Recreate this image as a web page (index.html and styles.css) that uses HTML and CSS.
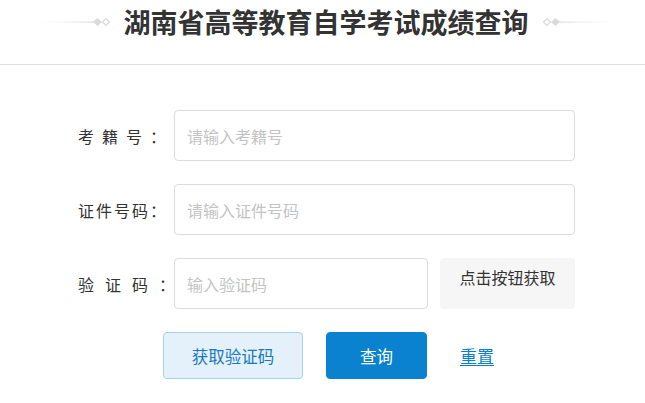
FILE: index.html
```html
<!DOCTYPE html>
<html lang="zh-CN">
<head>
<meta charset="utf-8">
<title>湖南省高等教育自学考试成绩查询</title>
<link rel="stylesheet" href="styles.css">
</head>
<body>
<header class="header">
  <div class="title-row">
    <svg class="decor" width="70" height="10" viewBox="0 0 70 10">
      <defs>
        <linearGradient id="gl" x1="0" x2="1" y1="0" y2="0">
          <stop offset="0" stop-color="#e4e4e4" stop-opacity="0"/>
          <stop offset="1" stop-color="#dcdcdc"/>
        </linearGradient>
      </defs>
      <rect x="0" y="4.5" width="55" height="1.2" fill="url(#gl)"/>
      <path d="M53 5 L57.5 1 L62 5 L57.5 9 Z" fill="#dadada"/>
      <path d="M62.5 5 L66 1.6 L69.5 5 L66 8.4 Z" fill="none" stroke="#dadada" stroke-width="1.3"/>
    </svg>
    <h1 class="title">湖南省高等教育自学考试成绩查询</h1>
    <svg class="decor" width="70" height="10" viewBox="0 0 70 10">
      <defs>
        <linearGradient id="gr" x1="0" x2="1" y1="0" y2="0">
          <stop offset="0" stop-color="#dcdcdc"/>
          <stop offset="1" stop-color="#e4e4e4" stop-opacity="0"/>
        </linearGradient>
      </defs>
      <path d="M0.5 5 L4 1.6 L7.5 5 L4 8.4 Z" fill="none" stroke="#dadada" stroke-width="1.3"/>
      <path d="M8 5 L12.5 1 L17 5 L12.5 9 Z" fill="#dadada"/>
      <rect x="15" y="4.5" width="55" height="1.2" fill="url(#gr)"/>
    </svg>
  </div>
</header>

<main class="form">
  <div class="row">
    <label class="label"><span class="label-text">考籍号：</span></label>
    <input class="input" type="text" placeholder="请输入考籍号">
  </div>
  <div class="row">
    <label class="label"><span class="label-text">证件号码：</span></label>
    <input class="input" type="text" placeholder="请输入证件号码">
  </div>
  <div class="row">
    <label class="label"><span class="label-text label-text--wide">验证码：</span></label>
    <input class="input input--short" type="text" placeholder="输入验证码">
    <div class="captcha">点击按钮获取</div>
  </div>
  <div class="actions">
    <button class="btn btn--light">获取验证码</button>
    <button class="btn btn--primary">查询</button>
    <a class="reset" href="#">重置</a>
  </div>
</main>
</body>
</html>
```

FILE: styles.css
```css
* {
  box-sizing: border-box;
}

html, body {
  margin: 0;
  padding: 0;
  background: #fff;
}

body {
  font-family: "Noto Sans CJK SC", "Noto Sans", sans-serif;
  color: #333;
  font-size: 16px;
}

.header {
  height: 65px;
  border-bottom: 1px solid #dedede;
  padding-left: 7px;
}

.title-row {
  height: 43px;
  display: flex;
  align-items: center;
  justify-content: center;
  gap: 14px;
}

.decor {
  display: block;
  flex: none;
}

.title {
  margin: 0;
  font-size: 27px;
  font-weight: 700;
  color: #333;
  line-height: 1;
  letter-spacing: 0;
}

.form {
  padding: 45px 0 0 78px;
}

.row {
  display: flex;
  align-items: center;
  height: 51px;
  margin-bottom: 23px;
}

.label {
  flex: none;
  width: 96px;
  font-size: 16px;
  color: #333;
  white-space: nowrap;
}

.label-text {
  display: inline-block;
  width: 88px;
  text-align: justify;
  text-align-last: justify;
}

.label-text--wide {
  width: 97px;
}

.input {
  flex: none;
  width: 401px;
  height: 100%;
  border: 1px solid #dcdcdc;
  border-radius: 4px;
  padding: 0 12px;
  font-family: inherit;
  font-size: 16px;
  color: #333;
  outline: none;
  background: #fff;
}

.input::placeholder {
  color: #c4c4c4;
}

.input--short {
  width: 254px;
}

.captcha {
  flex: none;
  width: 135px;
  height: 100%;
  margin-left: 12px;
  background: #f6f6f6;
  border-radius: 4px;
  text-align: center;
  padding-top: 7px;
  font-size: 16px;
  color: #333;
}

.actions {
  display: flex;
  align-items: center;
  margin-left: 85px;
  margin-top: 2px;
}

.btn {
  height: 47px;
  border-radius: 4px;
  font-family: inherit;
  font-size: 16.5px;
  cursor: pointer;
  padding: 0;
}

.btn--light {
  width: 140px;
  background: #e4f1fb;
  border: 1px solid #a6d2f1;
  color: #1879c2;
}

.btn--primary {
  width: 101px;
  margin-left: 23px;
  background: #0a82d0;
  border: 1px solid #0a82d0;
  color: #fff;
}

.reset {
  margin-left: 33px;
  color: #0a7fcc;
  font-size: 17px;
  text-decoration: underline;
  text-underline-offset: 2px;
}
```
